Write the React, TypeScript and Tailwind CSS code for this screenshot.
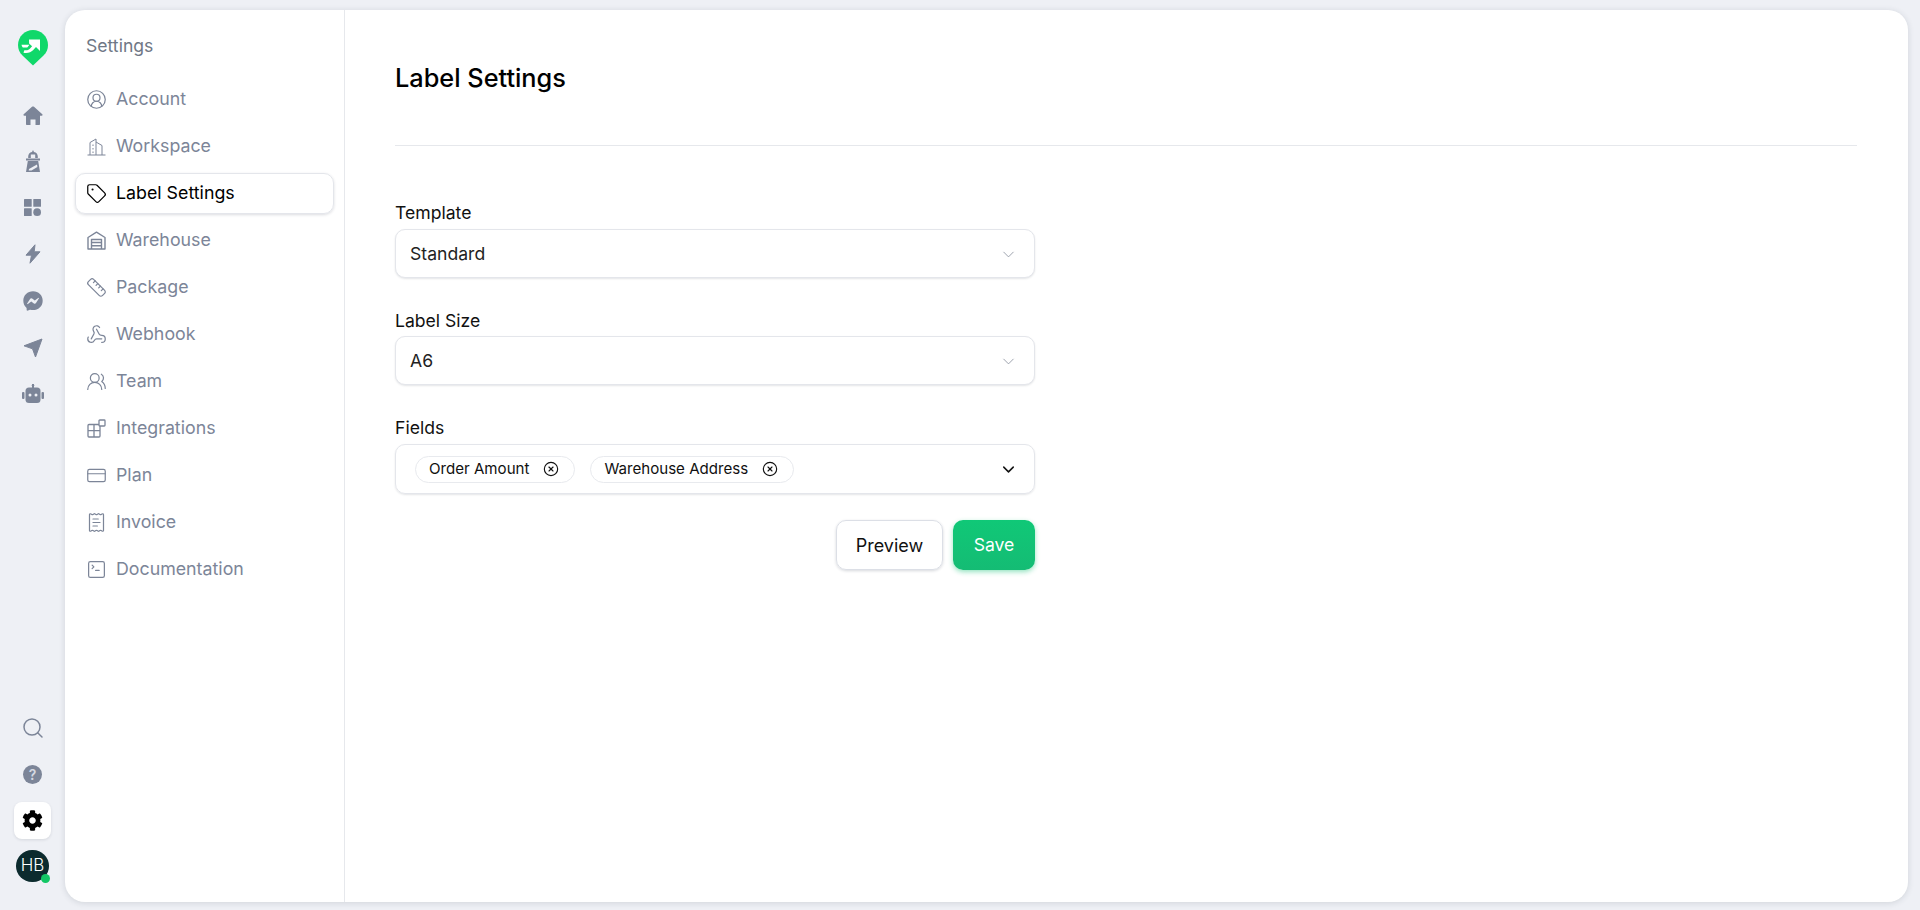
import { ChevronDown, CircleUserRound, Tag, Ruler, Webhook, UsersRound, CreditCard, ReceiptText, SquareTerminal, Search, CircleX } from 'lucide-react'
import { FaFacebookMessenger, FaCog } from 'react-icons/fa'

const railColor = '#7c8598'

function Home() {
  return (
    <svg width="20" height="19" viewBox="0 0 20 19" fill={railColor}>
      <path d="M9 .8c.6-.5 1.400-.5 2 0l8.300 7.400c.6.600.2 1.500-.6 1.500H17V18c0 .6-.4 1-1 1h-3.500v-5.500h-5V19H4c-.6 0-1-.4-1-1V9.700H1.300c-.8 0-1.200-.9-.6-1.500z" />
    </svg>
  )
}

function Lighthouse() {
  return (
    <svg width="16" height="22" viewBox="0 0 16 22" fill={railColor}>
      <path d="M8 0l1 2c2.400.5 3.800 2.200 3.800 4.600V8H3.200V6.600C3.200 4.200 4.600 2.500 7 2z" />
      <rect x="5.800" y="4.500" width="4.400" height="3.500" fill="#eef0f5" />
      <path d="M1 8.500h14v2H1z" />
      <path d="M2.800 11h10.400l1.800 11H1z" />
      <path d="M4 19l8-4.500.4 2.600-5.900 3.400H3.700z" fill="#eef0f5" />
    </svg>
  )
}

function Grid() {
  return (
    <svg width="17" height="17" viewBox="0 0 17 17" fill={railColor}>
      <rect x="0" y="0" width="7.700" height="7.700" rx="0.500" />
      <rect x="9.300" y="0" width="7.700" height="7.700" rx="0.500" />
      <rect x="0" y="9.300" width="7.700" height="7.700" rx="0.500" />
      <circle cx="13.150" cy="13.150" r="3.850" />
    </svg>
  )
}

function Bolt() {
  return (
    <svg width="16" height="20" viewBox="0 0 16 20" fill={railColor} stroke={railColor} strokeWidth="1" strokeLinejoin="round">
      <path d="M10 .8L1 11.200h5.500L5 19.200l10-11.400H9.200z" />
    </svg>
  )
}

function Send() {
  return (
    <svg width="20" height="20" viewBox="0 0 20 20" fill={railColor} stroke={railColor} strokeWidth="1" strokeLinejoin="round">
      <path d="M1 7.800L19 1l-6.500 18-3-8.200z" />
    </svg>
  )
}

function Robot() {
  return (
    <svg width="22" height="20" viewBox="0 0 22 20" fill={railColor}>
      <rect x="10" y="0" width="2" height="4" />
      <circle cx="11" cy="1.200" r="1.200" />
      <rect x="3.500" y="3.500" width="15" height="15.500" rx="3.500" />
      <rect x="0" y="8" width="2.500" height="7" rx="1" />
      <rect x="19.500" y="8" width="2.500" height="7" rx="1" />
      <circle cx="8" cy="11" r="1.500" fill="#eef0f5" />
      <circle cx="14" cy="11" r="1.500" fill="#eef0f5" />
    </svg>
  )
}

function Logo() {
  return (
    <svg width="30" height="36" viewBox="0 0 30 36">
      <path d="M15 35.500L4.500 25.500C1.500 22.500 0 19 0 15 0 6.700 6.700 0 15 0s15 6.700 15 15c0 4-1.500 7.500-4.500 10.500z" fill="#10d86a" />
      <path d="M11 9.500h11V21l-4-4-3 3.200c-2 2-5.500 3.500-9.500 2.500l.8-2.500c3 .5 4.500-.3 5.800-1.700l2-2.200-3-2.800z" fill="#fff" />
      <path d="M3.500 14.800h8l-2.200 2.700H4.800c-.7-.8-1.100-1.700-1.300-2.700z" fill="#fff" />
    </svg>
  )
}

function Workspace({ className }: { className?: string }) {
  return (
    <svg className={className} viewBox="-1.500 -1.500 21 21" fill="none" stroke="currentColor" strokeWidth="1">
      <path d="M0 17.500h18M2.500 17.500V5l6-3.500v16M8.500 4.500l6 3.500v9.500M5.500 7v1.500M5.500 10.500V12M5.500 14v1.500" />
    </svg>
  )
}

function WarehouseIcon({ className }: { className?: string }) {
  return (
    <svg className={className} viewBox="-1.500 -1.500 21 21" fill="none" stroke="currentColor" strokeWidth="1.400" strokeLinejoin="round">
      <path d="M.5 17.500V6L9 .7 17.500 6v11.500z" />
      <path d="M4 17.500V8h10v9.500M4 11h10M4 14.200h10" />
    </svg>
  )
}

function Integrations({ className }: { className?: string }) {
  return (
    <svg className={className} viewBox="-1.500 -1.500 21 21" fill="none" stroke="currentColor" strokeWidth="1.300">
      <rect x="0.500" y="5" width="12" height="12.500" rx="1" />
      <path d="M.5 11.200h12M6.500 5v12.500" />
      <rect x="11.500" y="0.500" width="6" height="6" rx="0.800" fill="#fff" />
    </svg>
  )
}

const links = [
  { name: 'Account', icon: CircleUserRound },
  { name: 'Workspace', icon: Workspace },
  { name: 'Label Settings', icon: Tag, active: true },
  { name: 'Warehouse', icon: WarehouseIcon },
  { name: 'Package', icon: Ruler },
  { name: 'Webhook', icon: Webhook },
  { name: 'Team', icon: UsersRound },
  { name: 'Integrations', icon: Integrations },
  { name: 'Plan', icon: CreditCard },
  { name: 'Invoice', icon: ReceiptText },
  { name: 'Documentation', icon: SquareTerminal },
]

function Select({ value }: { value: string }) {
  return (
    <div className="flex h-[49px] items-center justify-between rounded-[10px] border border-[#e4e6eb] bg-white pt-[1px] pl-[14px] pr-[16px] shadow-[0_1px_2px_rgba(30,40,60,0.12)]">
      <span className="text-[17.6px] text-[#222]">{value}</span>
      <ChevronDown size={19} strokeWidth={1.1} className="text-[#8f95a1]" />
    </div>
  )
}

function Chip({ label }: { label: string }) {
  return (
    <div className="flex h-[27px] items-center rounded-full border border-[#e8eaee] pl-[13px] pr-[15px] text-[15.1px] text-[#111]">
      <span>{label}</span>
      <CircleX size={16} strokeWidth={1.7} className="ml-[14px]" />
    </div>
  )
}

export default function App() {
  return (
    <div className="flex h-screen bg-[#eef0f5] font-['Inter',sans-serif]">
      <div className="flex w-[65px] shrink-0 flex-col items-center justify-between pt-[30px] pb-[28px]">
        <div className="flex flex-col items-center">
          <div className="mb-[27px] h-[35px]"><Logo /></div>
          <div className="flex h-[46px] items-center"><Home /></div>
          <div className="flex h-[46px] items-center"><Lighthouse /></div>
          <div className="flex h-[46px] items-center"><Grid /></div>
          <div className="flex h-[47px] items-center"><Bolt /></div>
          <div className="flex h-[47px] items-center"><FaFacebookMessenger size={20} color={railColor} /></div>
          <div className="flex h-[47px] items-center"><Send /></div>
          <div className="flex h-[46px] items-center"><Robot /></div>
        </div>
        <div className="flex flex-col items-center">
          <div className="flex h-[46px] items-center"><Search size={24} strokeWidth={1.5} color={railColor} /></div>
          <div className="flex h-[46px] items-center">
            <div className="flex h-[19px] w-[19px] items-center justify-center rounded-full bg-[#7c8598] text-[14px] font-semibold text-[#d5d9e2]">?</div>
          </div>
          <div className="flex h-[46px] items-center">
            <div className="flex h-[37px] w-[37px] items-center justify-center rounded-[8px] bg-white shadow-[0_1px_3px_rgba(30,40,60,0.12)]">
              <FaCog size={21} color="#000" />
            </div>
          </div>
          <div className="relative mt-[7px] flex h-[32px] w-[33px] items-center justify-center rounded-full bg-[#0c2b2e] text-[17px] font-light text-white">
            HB
            <span className="absolute right-[-1px] bottom-[-1px] h-[9px] w-[9px] rounded-full bg-[#12c765]" />
          </div>
        </div>
      </div>

      <div className="mt-[10px] mr-[12px] mb-[8px] flex flex-1 rounded-[20px] bg-white shadow-[0_1px_6px_rgba(30,40,60,0.14)]">
        <div className="w-[280px] shrink-0 border-r border-[#e6e8ec] px-[10px] pt-[24px]">
          <div className="mb-[21px] pl-[11px] text-[17.6px] leading-[24px] text-[#6f7785]">Settings</div>
          <div className="flex flex-col gap-[6px]">
            {links.map(l => (
              <div
                key={l.name}
                className={l.active
                  ? 'flex h-[41px] items-center gap-[9px] rounded-[10px] border border-[#e4e6eb] pl-[10px] text-[17.8px] text-[#000] shadow-[0_1px_3px_rgba(30,40,60,0.16)]'
                  : 'flex h-[41px] items-center gap-[9px] rounded-[10px] border border-transparent pl-[10px] text-[17.8px] text-[#7c8598]'}
              >
                <l.icon className="h-[21px] w-[21px]" strokeWidth={1.4} />
                <span>{l.name}</span>
              </div>
            ))}
          </div>
        </div>

        <div className="flex-1 pt-[50px] pr-[51px] pl-[50px]">
          <h1 className="text-[25.3px] leading-[36px] font-medium text-[#000]">Label Settings</h1>
          <div className="mt-[49px] border-t border-[#e6e8ec]" />
          <div className="mt-[55px] w-[640px]">
            <div className="mb-[4px] text-[17.6px] leading-[24px] text-[#111]">Template</div>
            <Select value="Standard" />
            <div className="mt-[31px] mb-[3px] text-[17.6px] leading-[24px] text-[#111]">Label Size</div>
            <Select value="A6" />
            <div className="mt-[31px] mb-[4px] text-[17.6px] leading-[24px] text-[#111]">Fields</div>
            <div className="flex h-[50px] items-center justify-between rounded-[10px] border border-[#e4e6eb] pr-[16px] pl-[19px] shadow-[0_1px_2px_rgba(30,40,60,0.12)]">
              <div className="flex gap-[15px]">
                <Chip label="Order Amount" />
                <Chip label="Warehouse Address" />
              </div>
              <ChevronDown size={19} strokeWidth={1.9} className="text-[#111]" />
            </div>
            <div className="mt-[26px] flex justify-end gap-[10px]">
              <button className="h-[50px] w-[107px] rounded-[10px] border border-[#dcdfe6] text-[18px] text-[#111] shadow-[0_1px_3px_rgba(30,40,60,0.18)]">Preview</button>
              <button className="h-[50px] w-[82px] rounded-[10px] bg-gradient-to-b from-[#10c877] to-[#14bc74] text-[17.6px] text-white shadow-[0_2px_5px_rgba(18,194,116,0.45)]">Save</button>
            </div>
          </div>
        </div>
      </div>
    </div>
  )
}
